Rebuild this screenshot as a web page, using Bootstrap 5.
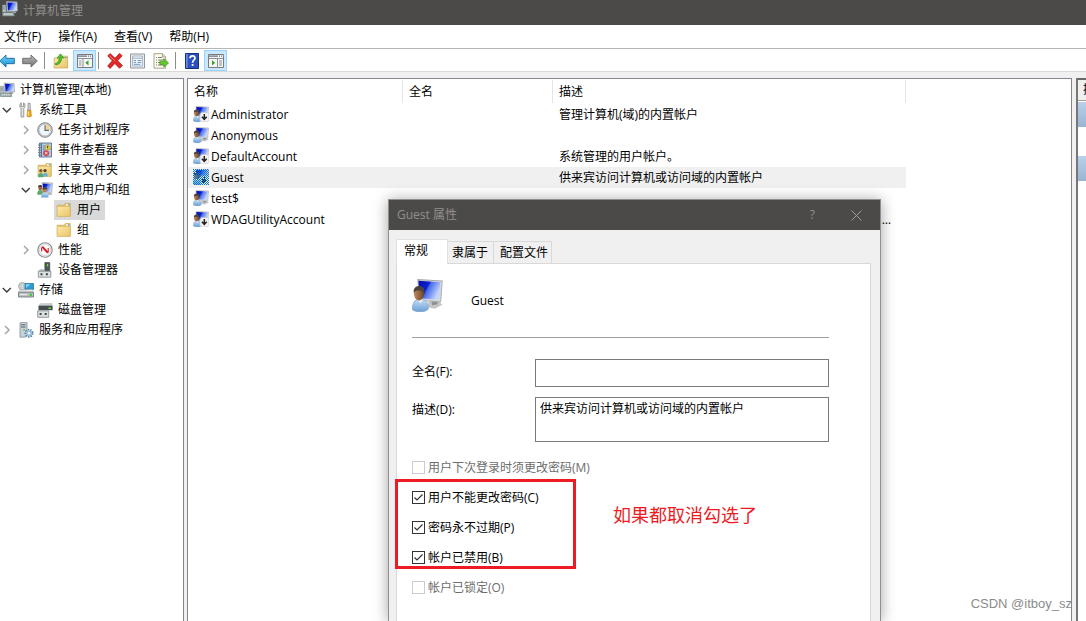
<!DOCTYPE html>
<html lang="zh-CN">
<head>
<meta charset="utf-8">
<meta name="viewport" content="width=device-width, initial-scale=1">
<title>计算机管理</title>
<link href="https://cdn.jsdelivr.net/npm/bootstrap@5.3.0/dist/css/bootstrap.min.css" rel="stylesheet">
<style>
:root{--line:#828790;--face:#f0f0f0;--bar:#4c4a48}
body{font-family:"Open Sans","Noto Sans CJK SC",sans-serif;font-size:12px;line-height:20px;color:#000;background:var(--face)}
button{font:inherit;color:inherit;border:0;background:none;padding:0}
svg{flex:none;display:block}
.title-bar{height:25px;background:var(--bar);color:#918f8d;padding:1px 2px 0;gap:5px}
.menu-bar{height:24px;background:#fff;border-bottom:1px solid #b5b5b5;padding:2px 4px 0;gap:17px}
.tool-bar{height:23px;background:#fff;border-bottom:1px solid #d9d9d9;padding-top:1px}
.tool-strip{margin-left:-4px}
.tool-btn{width:23px;height:21px;display:flex;align-items:center;justify-content:center;border:1px solid transparent;padding-right:2px}
.tool-btn.pressed{background:#cce8ff;border-color:#99d1ff;padding-right:0}
.tool-sep{width:8px;height:17px;margin-top:2px}
.tool-sep::before{content:"";display:block;width:1px;height:100%;margin-left:2px;background:#8d8d8d}
.work-area{padding-top:6px;min-height:0}
.tree-pane{width:184px;background:#fff;border:1px solid var(--line);border-width:1px 1px 0 0;padding-top:1px}
.tree-pane ul{list-style:none;margin:0;padding:0}
.tree-pane ul ul{padding-left:19px}
.node{display:flex;align-items:center;height:20px;white-space:nowrap}
.twisty{width:18px;flex:none;padding-left:2px}
.node a{color:inherit;text-decoration:none;display:flex;align-items:center;height:20px;gap:5px}
.node a.chosen{background:#d9d9d9;margin-left:-2px;padding:0 4px 0 2px}
.list-pane{margin-left:3px;background:#fff;border:1px solid var(--line);border-bottom:0;min-width:0}
.user-table{table-layout:fixed;width:718px;margin:0;color:#000;--bs-table-bg:transparent}
.user-table th{font-weight:400;height:25px;padding:0 6px;border:0;line-height:24px;position:relative;vertical-align:middle;color:#000}
.user-table th::after{content:"";position:absolute;right:0;top:1px;height:23px;width:1px;background:#e5e5e5}
.user-table td{height:21px;padding:0 6px;border:0;line-height:21px;white-space:nowrap;overflow:hidden;text-overflow:ellipsis;color:#000}
.user-table .name-cell{padding:0 0 0 5px}
.user-table .current{background:var(--face)}
.user-name{display:flex;align-items:center;gap:2px}
.user-name svg{margin-bottom:1px}
.action-pane{width:10px;margin-left:4px;background:#fff;border:2px solid #696969;border-width:2px 0 0 2px;border-left-color:#777;overflow:hidden}
.action-head{height:21px;background:var(--face);border-bottom:1px solid #a0a0a0;padding-left:5px;white-space:nowrap}
.action-band{height:25px;margin-top:1px;background:linear-gradient(#b9d1ea,#99b4d1)}
.action-band + .action-band{margin-top:29px}
.prop-dialog{position:absolute;left:388px;top:199px;bottom:0;width:493px;background:var(--face);border:1px solid #8f8f8f;border-bottom:0;box-shadow:0 1px 14px rgba(0,0,0,.36)}
.dialog-title{height:30px;background:var(--bar);color:#918f8d;padding:0 18px 0 8px}
.dialog-title .btn-gap{gap:36px}
.prop-tabs{margin:9px 7px 0;border:0;height:24px;align-items:flex-end;flex-wrap:nowrap}
.prop-tabs .nav-link{font-size:12px;line-height:20px;color:#000;border:1px solid #d9d9d9;border-bottom:0;border-radius:0;margin:0 0 0 -1px;padding:1px 5px 0 4px;height:22px;background:var(--face)}
.prop-tabs .nav-link.active{height:25px;width:52px;margin:0 0 -1px;text-align:left;padding:0 7px 3px;background:#fff;color:#000;position:relative;z-index:1}
.prop-tabs li:nth-child(3) .nav-link{padding:1px 3px 0 6px}
.prop-page{margin:0 9px 0 7px;background:#fff;border:1px solid #d9d9d9;border-bottom:0;height:calc(100% - 63px);padding:15px 41px 0 15px}
.identity{gap:28px;height:43px}
.rule{border-top:1px solid #a0a0a0;margin:15px 0 21px}
.field-row{display:flex;margin-bottom:10px}
.field-row label{width:123px;flex:none;line-height:26px}
.field-row .form-control{border:1px solid #7a7a7a;border-radius:0;font-size:12px;line-height:20px;color:#000;padding:1px 4px;resize:none;overflow:hidden;min-height:0;height:28px}
.field-row textarea.form-control{height:45px}
.tick-row{height:30px;display:flex;align-items:center;gap:3px;margin:0;padding:0;min-height:0}
.tick-row .form-check-label{padding-top:2px}
.tick-row .form-check-input{width:13px;height:13px;margin:0;float:none;border:1px solid #333;border-radius:0;flex:none;background-color:#fff;box-shadow:none}
.tick-row .form-check-input:checked{background-color:#fff;background-size:11px 11px;background-image:url("data:image/svg+xml,%3Csvg xmlns='http://www.w3.org/2000/svg' viewBox='0 0 11 11'%3E%3Cpath d='M1.5 5.5 4 8 9.5 2.5' fill='none' stroke='%23333' stroke-width='1.2'/%3E%3C/svg%3E")}
.tick-row .form-check-input:disabled{border-color:#ccc;opacity:1}
.tick-row .form-check-input:disabled ~ .form-check-label{color:#6d6d6d;opacity:1}
.red-frame{position:absolute;left:-17px;top:-3px;width:181px;height:90px;border:3px solid #ed1c24;pointer-events:none}
.red-note{position:absolute;left:201px;top:19px;font-size:18px;line-height:28px;color:#ed1c24;white-space:nowrap}
.watermark{position:absolute;right:14px;bottom:7px;font:13px/20px "Liberation Sans",sans-serif;color:#8b8b8b}
</style>
</head>
<body class="vh-100 overflow-hidden position-relative d-flex flex-column">

<svg width="0" height="0" class="position-absolute" aria-hidden="true">
  <defs>
    <linearGradient id="scr" x1="0" y1="0" x2="1" y2=".45"><stop offset="0" stop-color="#0410a8"/><stop offset=".45" stop-color="#0c1ed0"/><stop offset=".52" stop-color="#4468ea"/><stop offset="1" stop-color="#c3d6ff"/></linearGradient>
    <linearGradient id="fold" x1="0" y1="0" x2="1" y2="1"><stop offset="0" stop-color="#fdeaa9"/><stop offset="1" stop-color="#e9c468"/></linearGradient>
    <linearGradient id="blu" x1="0" y1="0" x2="0" y2="1"><stop offset="0" stop-color="#7fd3f7"/><stop offset="1" stop-color="#0b8fd6"/></linearGradient>
    <linearGradient id="gry" x1="0" y1="0" x2="0" y2="1"><stop offset="0" stop-color="#bdbdbd"/><stop offset="1" stop-color="#707070"/></linearGradient>
    <linearGradient id="shirt" x1="0" y1="0" x2="0" y2="1"><stop offset="0" stop-color="#c5dff5"/><stop offset="1" stop-color="#6a9fd6"/></linearGradient>
    <linearGradient id="skin" x1="0" y1="0" x2="1" y2="0"><stop offset="0" stop-color="#c08a5a"/><stop offset="1" stop-color="#6e452a"/></linearGradient>
    <pattern id="dots" width="2" height="2" patternUnits="userSpaceOnUse"><path d="M0 0h1v1H0zM1 1h1v1H1z" fill="#0078d7"/></pattern>
    <symbol id="computer" viewBox="0 0 16 16"><path d="M4.5.5 15 1 15.5 10 5 10.5z" fill="#d8dadb" stroke="#969b9f" stroke-width=".7"/><path d="m5.4 1.4 8.8.4.4 7.2-8.7.5z" fill="url(#scr)"/><path d="m10 10.2 3-.3 1.5 2-4 .5z" fill="#9ba1a5"/><path d="M.5 4h3.2l.6 7H.5z" fill="#bec7ca" stroke="#77898c" stroke-width=".6"/><path d="M1 6h2M1 8h2.5" stroke="#6d8587"/><path d="M.5 11.5h11l1 3.5H.7z" fill="#a9b5b5" stroke="#68787a" stroke-width=".7"/><path d="M2 13h8.5" stroke="#e3eaea" stroke-dasharray="1.4 .8"/></symbol>
    <symbol id="user" viewBox="0 0 16 16"><path d="m8.5 11 5-.4 2.2 1.9-4 1.9-4-.8z" fill="#c3c5c7"/><path d="m10 10.5 2.8-.2.6 2-3 .4z" fill="#8f9295"/><path d="M3 .3 15.6 1l-.8 10-11-.6z" fill="#d6d8d9" stroke="#a9abad" stroke-width=".5"/><path d="M3.3.9 14.6 1.6l-.7 8.4L4 9.3z" fill="url(#scr)"/><path d="M.2 14.9c0-3.3 1-5 4-5.2 3 .2 4.3 1.8 4.2 5-2 1.6-6 1.6-8.2.2z" fill="url(#shirt)" stroke="#7099c2" stroke-width=".3"/><path d="m2.8 9.8 2.8-.1-1.2 2z" fill="#f4f4f4"/><ellipse cx="3.6" cy="7.1" rx="2.6" ry="3.3" fill="url(#skin)"/><path d="M.9 6.8C.6 4.3 2 3.3 4 3.4c2 .1 2.9 1.6 2.3 4.3-.4-1.6-.9-2-1.8-2C3 5.6 1.8 5.4.9 6.8z" fill="#4a423d"/></symbol>
    <symbol id="userOff" viewBox="0 0 16 16"><use href="#user"/><path d="M8.5 6.5H15L16 8v6l-2 2H8.5L7 14V8.5z" fill="#f2f2f2" stroke="#c4c4c4" stroke-width=".6"/><path d="M11.3 8v5M8.9 10.8l2.4 2.6 2.4-2.6" fill="none" stroke="#222" stroke-width="1.5"/></symbol>
    <symbol id="folder" viewBox="0 0 16 16"><path d="M1.2 14.2v-11h7l1.2-1.7h4.9v12.7z" fill="#e8c265" stroke="#c9a04c" stroke-width=".6"/><path d="M10 2.2h3.5v1.4H10z" fill="#f8fbff"/><path d="M12 2.2h1.5v1.4H12z" fill="#4698d7"/><path d="M1.2 4.4h12.9v10H1.2z" fill="url(#fold)" stroke="#d6b05a" stroke-width=".5"/></symbol>
    <symbol id="tools" viewBox="0 0 16 16"><path d="M3.2.8C1.4 1.8 1.2 5.3 3 6.5V15h2.8V6.5C7.6 5.4 7.4 2 5.6.8v3.6H3.2z" fill="#e1e1df" stroke="#777" stroke-width=".7"/><path d="M10.2 1.2h1.8l.3 7.3h-2.4z" fill="#ddd" stroke="#777" stroke-width=".7"/><path d="M9.5 8.2h3.3l.6 6q-2.2 1.5-4.4 0z" fill="#eaa91d" stroke="#b77610" stroke-width=".6"/><path d="M10.4 9.5v4" stroke="#ffe68a"/></symbol>
    <symbol id="clock" viewBox="0 0 16 16"><circle cx="8" cy="8" r="7.3" fill="#c4c6c7" stroke="#7f8386" stroke-width=".9"/><circle cx="8" cy="8" r="5.8" fill="#eff5fb" stroke="#aeb6bd" stroke-width=".5"/><path d="M8 8V2.5A5.5 5.5 0 0 1 13.5 8z" fill="#f3d294"/><path d="M8 3.2V8.4h4" fill="none" stroke="#566b7f" stroke-width="1.1"/></symbol>
    <symbol id="events" viewBox="0 0 16 16"><path d="M2.5 1h12v14h-12z" fill="#b4c8e0" stroke="#466489" stroke-width=".8"/><path d="M4.4 1v14" stroke="#4d6d94"/><path d="M1 3h3M1 5.5h3M1 8h3M1 10.5h3M1 13h3" stroke="#777" stroke-width=".9"/><path d="M6 4h2.5M6 6h2M6 8h2M6 10h1.5M6 12h1.5" stroke="#5277a4" stroke-width=".8"/><path d="m10.7 1.8 3.2 5.5H7.6z" fill="#ffe03c" stroke="#a28408" stroke-width=".5"/><path d="M10.7 3.8v2.6" stroke="#333"/><circle cx="9.2" cy="11.2" r="2.7" fill="#e55059" stroke="#af2431" stroke-width=".4"/><path d="m8.2 10.2 2 2m0-2-2 2" stroke="#fff" stroke-width=".8"/></symbol>
    <symbol id="shared" viewBox="0 0 16 16"><use href="#folder"/><circle cx="3.8" cy="8.8" r="1.7" fill="#7e5a3a"/><circle cx="8" cy="8.6" r="1.7" fill="#51422f"/><path d="M1 15.2c0-3 .9-4.2 2.8-4.2s2.8 1.2 2.8 4.2z" fill="#55ac73"/><path d="M6 14.4c0-2.8.6-3.7 2.3-3.7s2.6 1 2.6 3.7z" fill="#6faeda"/></symbol>
    <symbol id="group" viewBox="0 0 16 16"><path d="m5 .5 10.5.6-.8 9.5-9 .2z" fill="#d5d7d8" stroke="#999" stroke-width=".6"/><path d="m5.8 1.4 8.7.5-.6 7.7-7.6.4z" fill="url(#scr)"/><path d="m10 11 4-.4 1.5 1.8-4 1z" fill="#b7b9bb"/><ellipse cx="3.2" cy="5.7" rx="2" ry="2.6" fill="#986544"/><path d="M1 5C1 2.7 5 2 5.2 4.8z" fill="#473a34"/><path d="M.2 12.8C.2 9.5 1 8 3.2 8s3 1.5 3 4.8z" fill="#60a869"/><ellipse cx="7.8" cy="8" rx="2.1" ry="2.7" fill="#bb8054"/><path d="M5.5 7.6c-.2-3 4.6-3.2 4.7-.3z" fill="#574029"/><path d="M4.1 15.5c0-3.5 1.2-5 3.7-5s3.7 1.5 3.7 5z" fill="url(#shirt)"/></symbol>
    <symbol id="perf" viewBox="0 0 16 16"><circle cx="8" cy="8" r="7.2" fill="#f9f9f9" stroke="#85898b" stroke-width="1.1"/><circle cx="8" cy="8" r="5.6" fill="#fff" stroke="#c3c6c8" stroke-width=".7"/><path d="M4.6 9.5V5.4M11.2 10.5V6" stroke="#d61d24" stroke-width="1.1" fill="none"/><path d="m5.2 4.6 5.7 6.2" stroke="#d61d24" stroke-width="2"/></symbol>
    <symbol id="device" viewBox="0 0 16 16"><path d="M7.8.5h5v9h-5z" fill="#50565a" stroke="#2c3235" stroke-width=".5"/><path d="M10.5 2v2.5" stroke="#75da35" stroke-width="1.2"/><path d="M2.5 7.2h4.8v2.5H2z" fill="#b9bdbf"/><path d="M1.3 9.2h12.5v6H1.3z" fill="#dcdfe0" stroke="#7e8588" stroke-width=".8"/><path d="M3.5 11.2h2v2h-2zM8.9 11.2h2v2h-2z" fill="#3e484d"/></symbol>
    <symbol id="storage" viewBox="0 0 16 16"><circle cx="4.4" cy="4.2" r="3.8" fill="#cbd5d4" stroke="#829391" stroke-width=".7"/><circle cx="4.4" cy="4.2" r="1.2" fill="#fff" stroke="#829391" stroke-width=".5"/><path d="M7 1.5h8.5v5.8H7z" fill="#299bd5" stroke="#24678d" stroke-width=".7"/><path d="M7.7 2.3h5L8 6z" fill="#83d2f4"/><path d="m2 8 12-.4 1.5 2.6H.5z" fill="#e5e7e7" stroke="#999" stroke-width=".3"/><path d="M.5 10.2h15V15H.5z" fill="#b9bec0" stroke="#667073" stroke-width=".8"/><path d="M12.8 11.5V14" stroke="#3fc62c" stroke-width="2"/><path d="M2 12.6h7" stroke="#e9ecec"/></symbol>
    <symbol id="disk" viewBox="0 0 16 16"><path d="m3 1.2 12.3-.1.3 2.7H1.5z" fill="#cccfce"/><path d="M1.5 3.6h14.1v4.6H1.5z" fill="#454c50"/><path d="M11.5 6.2h2.5" stroke="#6de135" stroke-width="1.4"/><path d="M.7 8.8h11v6.5H.7z" fill="#dcdfe0" stroke="#7e8588" stroke-width=".8"/><path d="M2.6 11h2v2h-2zM7.7 11h2v2h-2z" fill="#3e484d"/></symbol>
    <symbol id="services" viewBox="0 0 16 16"><path d="m2 1 2-.8h5v13.5l-2 1.5H2z" fill="#c9d2d6" stroke="#75858d" stroke-width=".7"/><path d="M3 2.8h4.5M3 5h4.5" stroke="#52616a"/><path d="M6 7.3v1.2" stroke="#47b338" stroke-width="1.4"/><circle cx="11" cy="11.2" r="3.7" fill="#d6e6f3" stroke="#5380ab" stroke-width="1.7" stroke-dasharray="1.5 1.1"/><circle cx="11" cy="11.2" r="3" fill="#98bad8"/><circle cx="11" cy="11.2" r="1.2" fill="#fff"/></symbol>
    <symbol id="open" viewBox="0 0 10 10"><path d="m.8 3 4 4 4-4" fill="none" stroke="#404040" stroke-width="1.5"/></symbol>
    <symbol id="shut" viewBox="0 0 10 10"><path d="m3 1 4 4-4 4" fill="none" stroke="#a6a6a6" stroke-width="1.5"/></symbol>
    <symbol id="back" viewBox="0 0 16 16"><path d="M.7 8 7 2v3.3h8.3v5.4H7V14z" fill="url(#blu)" stroke="#16699b" stroke-width=".9"/></symbol>
    <symbol id="next" viewBox="0 0 16 16"><path d="M15.3 8 9 2v3.3H.7v5.4H9V14z" fill="url(#gry)" stroke="#666" stroke-width=".9"/></symbol>
    <symbol id="up" viewBox="0 0 16 16"><path d="M1.2 15V5h6l1.4-1.8h6V15z" fill="url(#fold)" stroke="#c9a04c" stroke-width=".7"/><path d="M11.5 4h2v1.2h-2z" fill="#4698d7"/><path d="M2 10.8C5 10 6.2 8 6.2 5H4L7.5.8l3.3 4.2H8.6c0 4-2.2 6.3-5.6 7z" fill="#4fc32a" stroke="#288413" stroke-width=".6"/></symbol>
    <symbol id="treeView" viewBox="0 0 16 14"><path d="M.5.5h15v13H.5z" fill="#f5f5f5" stroke="#777c82"/><path d="M1 2.2h14" stroke="#69727b" stroke-width="1.3" stroke-dasharray="9 1 1 1 1 1"/><path d="M1 4.5h14M6 5v8.5" stroke="#8a9197"/><path d="M2 7h3M2 9h3M2 11h3" stroke="#8b9299" stroke-dasharray="2 .5"/><path d="M11.5 6.2v5.2L8.3 8.8z" fill="#3a9d27"/></symbol>
    <symbol id="paneView" viewBox="0 0 16 14"><path d="M.5.5h15v13H.5z" fill="#f5f5f5" stroke="#777c82"/><path d="M1 2.2h14" stroke="#69727b" stroke-width="1.3" stroke-dasharray="9 1 1 1 1 1"/><path d="M1 4.5h14M9.5 5v8.5" stroke="#8a9197"/><path d="M11 7h3M11 9h3M11 11h3" stroke="#8b9299"/><path d="M4 6.2v5.2l3.2-2.6z" fill="#3a9d27"/></symbol>
    <symbol id="delete" viewBox="0 0 16 16"><path d="M.7 2.8 3.2.6 8 5.2 12.5.4l2.7 2.3-4.6 5 4.8 4.8-2.8 2.8-4.8-4.8-4.7 5-2.4-2.6 4.6-5.1z" fill="#e32726" stroke="#a80e12" stroke-width=".7"/><path d="m2.5 2.8 5.6 5.1" stroke="#ff8780"/></symbol>
    <symbol id="props" viewBox="0 0 16 16"><path d="M.5.5h15v15H.5z" fill="#eceded" stroke="#8c9093"/><path d="M2.8 2.7h10.4v10.6H2.8z" fill="#fafcff" stroke="#8aa0b8" stroke-width=".8"/><path d="M3 5h10" stroke="#8aa0b8"/><path d="M4 7.5h2.5M8 7.5h4M4 9.5h2.5M8 9.5h4M4 11.5h7" stroke="#5d8fb9"/></symbol>
    <symbol id="export" viewBox="0 0 16 16"><path d="M1 .7h8.5L12.7 4v11.2H1z" fill="#fffde9" stroke="#938b73" stroke-width=".8"/><path d="M9.5.7V4h3.2" fill="#e5dcba" stroke="#938b73" stroke-width=".7"/><path d="M3 4.5h1M5 4.5h4M3 7h1M5 7h6M3 9.5h1M5 9.5h2M3 12h1M5 12h6" stroke="#7b7e82"/><path d="M6.8 8.2h4V5.6L15.6 10l-4.8 4.2v-2.6h-4z" fill="#65c52c" stroke="#338e14" stroke-width=".6"/></symbol>
    <symbol id="help" viewBox="0 0 14 16"><path d="M.5.5h13v15H.5z" fill="#2c50bd" stroke="#17317d"/><path d="M1 1h1.7v14H1z" fill="#6f8ce1"/><path d="M5 5.3c.2-3.5 5.5-3 5 0C9.8 7 7.6 7.2 7.6 9.7" fill="none" stroke="#fff" stroke-width="1.7"/><path d="M6.7 11h1.8v1.9H6.7z" fill="#fff"/></symbol>
  </defs>
</svg>

<header class="title-bar d-flex align-items-start">
  <svg width="16" height="16"><use href="#computer"/></svg>
  <span>计算机管理</span>
</header>

<nav class="menu-bar d-flex align-items-start" aria-label="菜单">
  <button type="button">文件(F)</button>
  <button type="button">操作(A)</button>
  <button type="button">查看(V)</button>
  <button type="button">帮助(H)</button>
</nav>

<div class="tool-bar" role="toolbar" aria-label="工具栏">
  <div class="tool-strip d-flex">
    <button type="button" class="tool-btn" aria-label="后退"><svg width="16" height="16"><use href="#back"/></svg></button>
    <button type="button" class="tool-btn" aria-label="前进"><svg width="16" height="16"><use href="#next"/></svg></button>
    <span class="tool-sep"></span>
    <button type="button" class="tool-btn" aria-label="向上"><svg width="16" height="16"><use href="#up"/></svg></button>
    <button type="button" class="tool-btn pressed" aria-label="显示/隐藏控制台树"><svg width="16" height="14"><use href="#treeView"/></svg></button>
    <span class="tool-sep"></span>
    <button type="button" class="tool-btn" aria-label="删除"><svg width="16" height="16"><use href="#delete"/></svg></button>
    <button type="button" class="tool-btn" aria-label="属性"><svg width="15" height="16"><use href="#props"/></svg></button>
    <button type="button" class="tool-btn" aria-label="导出列表"><svg width="16" height="16"><use href="#export"/></svg></button>
    <span class="tool-sep"></span>
    <button type="button" class="tool-btn" aria-label="帮助"><svg width="14" height="16"><use href="#help"/></svg></button>
    <button type="button" class="tool-btn pressed" aria-label="显示/隐藏操作窗格"><svg width="16" height="14"><use href="#paneView"/></svg></button>
  </div>
</div>

<main class="work-area d-flex flex-grow-1">
  <aside class="tree-pane flex-shrink-0">
    <div class="node"><a href="#"><svg width="15" height="16"><use href="#computer"/></svg>计算机管理(本地)</a></div>
    <ul>
      <li>
        <div class="node"><span class="twisty"><svg width="10" height="10"><use href="#open"/></svg></span><a href="#"><svg width="16" height="16"><use href="#tools"/></svg>系统工具</a></div>
        <ul>
          <li class="node"><span class="twisty"><svg width="10" height="10"><use href="#shut"/></svg></span><a href="#"><svg width="16" height="16"><use href="#clock"/></svg>任务计划程序</a></li>
          <li class="node"><span class="twisty"><svg width="10" height="10"><use href="#shut"/></svg></span><a href="#"><svg width="16" height="16"><use href="#events"/></svg>事件查看器</a></li>
          <li class="node"><span class="twisty"><svg width="10" height="10"><use href="#shut"/></svg></span><a href="#"><svg width="16" height="16"><use href="#shared"/></svg>共享文件夹</a></li>
          <li>
            <div class="node"><span class="twisty"><svg width="10" height="10"><use href="#open"/></svg></span><a href="#"><svg width="16" height="16"><use href="#group"/></svg>本地用户和组</a></div>
            <ul>
              <li class="node"><span class="twisty"></span><a href="#" class="chosen"><svg width="16" height="16"><use href="#folder"/></svg>用户</a></li>
              <li class="node"><span class="twisty"></span><a href="#"><svg width="16" height="16"><use href="#folder"/></svg>组</a></li>
            </ul>
          </li>
          <li class="node"><span class="twisty"><svg width="10" height="10"><use href="#shut"/></svg></span><a href="#"><svg width="16" height="16"><use href="#perf"/></svg>性能</a></li>
          <li class="node"><span class="twisty"></span><a href="#"><svg width="16" height="16"><use href="#device"/></svg>设备管理器</a></li>
        </ul>
      </li>
      <li>
        <div class="node"><span class="twisty"><svg width="10" height="10"><use href="#open"/></svg></span><a href="#"><svg width="16" height="16"><use href="#storage"/></svg>存储</a></div>
        <ul>
          <li class="node"><span class="twisty"></span><a href="#"><svg width="16" height="16"><use href="#disk"/></svg>磁盘管理</a></li>
        </ul>
      </li>
      <li class="node"><span class="twisty"><svg width="10" height="10"><use href="#shut"/></svg></span><a href="#"><svg width="16" height="16"><use href="#services"/></svg>服务和应用程序</a></li>
    </ul>
  </aside>

  <section class="list-pane flex-grow-1">
    <table class="table user-table">
      <colgroup><col style="width:215px"><col style="width:150px"><col></colgroup>
      <thead><tr><th scope="col">名称</th><th scope="col">全名</th><th scope="col">描述</th></tr></thead>
      <tbody>
        <tr><td class="name-cell"><span class="user-name"><svg width="16" height="16"><use href="#userOff"/></svg>Administrator</span></td><td></td><td>管理计算机(域)的内置帐户</td></tr>
        <tr><td class="name-cell"><span class="user-name"><svg width="16" height="16"><use href="#user"/></svg>Anonymous</span></td><td></td><td></td></tr>
        <tr><td class="name-cell"><span class="user-name"><svg width="16" height="16"><use href="#userOff"/></svg>DefaultAccount</span></td><td></td><td>系统管理的用户帐户。</td></tr>
        <tr class="current"><td class="name-cell"><span class="user-name"><svg width="16" height="16" shape-rendering="crispEdges"><use href="#userOff"/><rect width="16" height="16" fill="url(#dots)"/></svg>Guest</span></td><td></td><td>供来宾访问计算机或访问域的内置帐户</td></tr>
        <tr><td class="name-cell"><span class="user-name"><svg width="16" height="16"><use href="#user"/></svg>test$</span></td><td></td><td></td></tr>
        <tr><td class="name-cell"><span class="user-name"><svg width="16" height="16"><use href="#userOff"/></svg>WDAGUtilityAccount</span></td><td></td><td>系统为Windows Defender应用程序防护方案管理和使用的用户帐户。</td></tr>
      </tbody>
    </table>
  </section>

  <aside class="action-pane flex-shrink-0">
    <div class="action-head">操作</div>
    <div class="action-band"></div>
    <div class="action-band"></div>
  </aside>
</main>

<section class="prop-dialog" role="dialog" aria-labelledby="dlgTitle">
  <div class="dialog-title d-flex align-items-center justify-content-between">
    <span id="dlgTitle">Guest 属性</span>
    <div class="d-flex align-items-center btn-gap">
      <button type="button" aria-label="帮助">?</button>
      <button type="button" aria-label="关闭"><svg width="11" height="11" viewBox="0 0 11 11"><path d="m.5.5 10 10m0-10-10 10" stroke="#a09e9c" fill="none"/></svg></button>
    </div>
  </div>
  <ul class="nav nav-tabs prop-tabs" role="tablist">
    <li><button type="button" class="nav-link active" role="tab" aria-selected="true">常规</button></li>
    <li><button type="button" class="nav-link" role="tab">隶属于</button></li>
    <li><button type="button" class="nav-link" role="tab">配置文件</button></li>
  </ul>
  <form class="prop-page">
    <div class="identity d-flex align-items-start">
      <svg width="31" height="33" viewBox="0 0 16 16" preserveAspectRatio="none"><use href="#user" width="16" height="16"/></svg>
      <span class="pt-2 mt-1">Guest</span>
    </div>
    <div class="rule"></div>
    <div class="field-row">
      <label for="fullName">全名(F):</label>
      <input id="fullName" type="text" class="form-control">
    </div>
    <div class="field-row">
      <label for="descr">描述(D):</label>
      <textarea id="descr" class="form-control">供来宾访问计算机或访问域的内置帐户</textarea>
    </div>
    <div class="form-check tick-row"><input class="form-check-input" type="checkbox" id="c1" disabled><label class="form-check-label" for="c1">用户下次登录时须更改密码(M)</label></div>
    <div class="position-relative">
      <div class="form-check tick-row"><input class="form-check-input" type="checkbox" id="c2" checked><label class="form-check-label" for="c2">用户不能更改密码(C)</label></div>
      <div class="form-check tick-row"><input class="form-check-input" type="checkbox" id="c3" checked><label class="form-check-label" for="c3">密码永不过期(P)</label></div>
      <div class="form-check tick-row"><input class="form-check-input" type="checkbox" id="c4" checked><label class="form-check-label" for="c4">帐户已禁用(B)</label></div>
      <div class="red-frame"></div>
      <div class="red-note">如果都取消勾选了</div>
    </div>
    <div class="form-check tick-row"><input class="form-check-input" type="checkbox" id="c5" disabled><label class="form-check-label" for="c5">帐户已锁定(O)</label></div>
  </form>
</section>

<div class="watermark">CSDN @itboy_sz</div>
<script src="https://cdn.jsdelivr.net/npm/bootstrap@5.3.0/dist/js/bootstrap.bundle.min.js"></script>
</body>
</html>
